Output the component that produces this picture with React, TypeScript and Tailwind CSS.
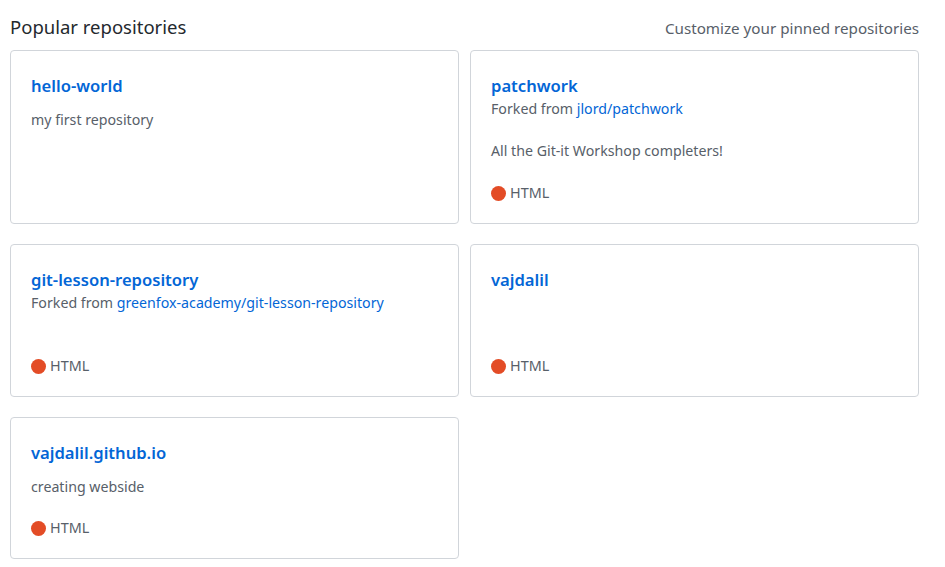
type Repo = {
  name: string
  fork?: string
  desc?: string
  lang?: string
}

const repos: Repo[] = [
  { name: 'hello-world', desc: 'my first repository' },
  { name: 'patchwork', fork: 'jlord/patchwork', desc: 'All the Git-it Workshop completers!', lang: 'HTML' },
  { name: 'git-lesson-repository', fork: 'greenfox-academy/git-lesson-repository', lang: 'HTML' },
  { name: 'vajdalil', lang: 'HTML' },
  { name: 'vajdalil.github.io', desc: 'creating webside', lang: 'HTML' },
]

function RepoCard({ repo }: { repo: Repo }) {
  return (
    <div className="flex flex-col rounded-[4px] border border-[#d1d5da] bg-white px-5 pt-[21px] pb-5">
      <a className="block text-[16.6px] leading-7 font-semibold text-[#0366d6]">{repo.name}</a>
      {repo.fork && (
        <p className="text-[14.2px] leading-[18px] text-[#586069]">
          Forked from <a className="text-[#0366d6]">{repo.fork}</a>
        </p>
      )}
      {repo.desc ? (
        <p
          className={
            repo.fork
              ? 'mt-[23px] mb-[22px] text-[14.2px] leading-5 text-[#586069]'
              : 'mt-[10px] mb-[21px] text-[14.2px] leading-5 text-[#586069]'
          }
        >
          {repo.desc}
        </p>
      ) : (
        repo.fork && <div className="h-[44px]" />
      )}
      {repo.lang && (
        <p className="mt-auto flex items-center gap-[4px] text-[14.4px] leading-5 text-[#586069]">
          <span className="inline-block h-[15px] w-[15px] rounded-full bg-[#e34c26]" />
          {repo.lang}
        </p>
      )}
    </div>
  )
}

export default function App() {
  return (
    <div className="min-h-screen bg-white font-['Noto_Sans',sans-serif] text-[#24292e]">
      <div className="w-[909px] ml-[10px] pt-[13px]">
        <div className="flex items-baseline justify-between h-[37px]">
          <h2 className="text-[18.5px] leading-7">Popular repositories</h2>
          <span className="text-[15.2px] text-[#586069]">Customize your pinned repositories</span>
        </div>
        <div className="grid grid-cols-2 gap-x-[11px] gap-y-5">
          {repos.map((repo) => (
            <RepoCard key={repo.name} repo={repo} />
          ))}
        </div>
      </div>
    </div>
  )
}
